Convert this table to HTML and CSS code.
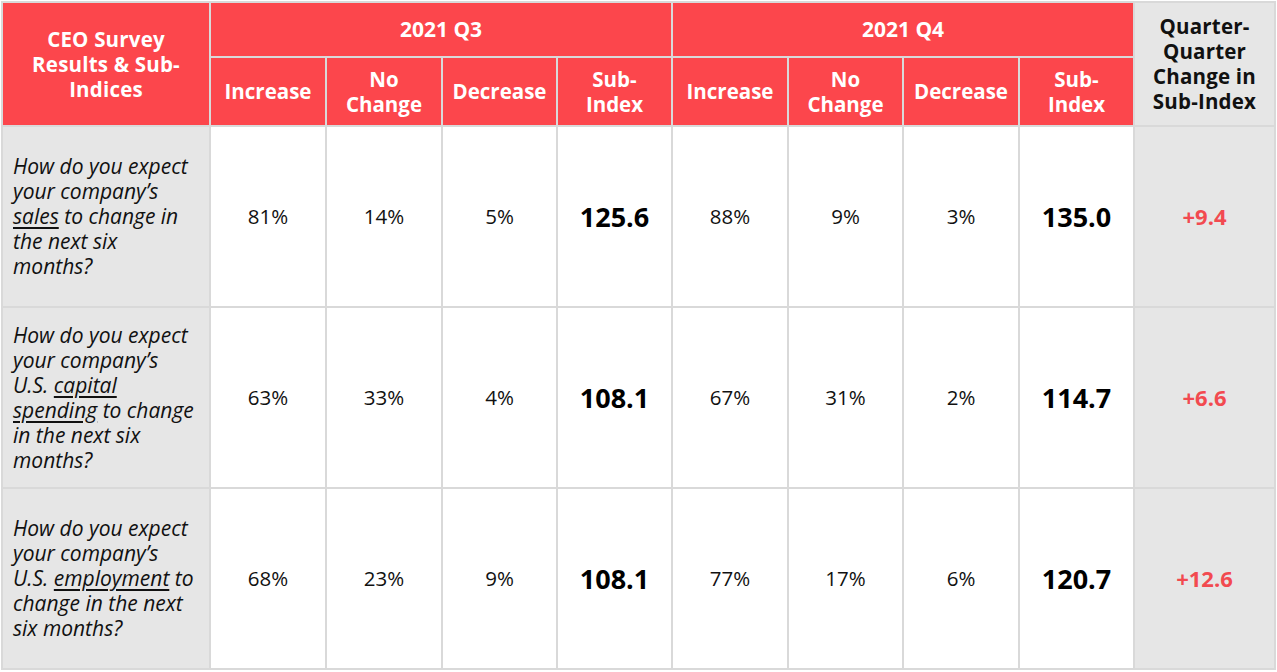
FILE: index.html
```html
<!DOCTYPE html>
<html>
<head>
<meta charset="utf-8">
<link rel="stylesheet" href="styles.css">
</head>
<body>
<div class="survey">
  <div class="cell head title"><span>CEO Survey Results &amp; Sub-Indices</span></div>
  <div class="cell head quarter q3">2021 Q3</div>
  <div class="cell head quarter q4">2021 Q4</div>
  <div class="cell gray-head change-head"><span>Quarter-Quarter Change in Sub-Index</span></div>

  <div class="cell head sub">Increase</div>
  <div class="cell head sub"><span>No<br>Change</span></div>
  <div class="cell head sub">Decrease</div>
  <div class="cell head sub"><span>Sub-<br>Index</span></div>
  <div class="cell head sub">Increase</div>
  <div class="cell head sub"><span>No<br>Change</span></div>
  <div class="cell head sub">Decrease</div>
  <div class="cell head sub"><span>Sub-<br>Index</span></div>

  <div class="cell question"><p>How do you expect your company’s <u>sales</u> to change in the next six months?</p></div>
  <div class="cell num">81%</div>
  <div class="cell num">14%</div>
  <div class="cell num">5%</div>
  <div class="cell idx">125.6</div>
  <div class="cell num">88%</div>
  <div class="cell num">9%</div>
  <div class="cell num">3%</div>
  <div class="cell idx">135.0</div>
  <div class="cell delta">+9.4</div>

  <div class="cell question"><p>How do you expect your company’s U.S. <u>capital spending</u> to change in the next six months?</p></div>
  <div class="cell num">63%</div>
  <div class="cell num">33%</div>
  <div class="cell num">4%</div>
  <div class="cell idx">108.1</div>
  <div class="cell num">67%</div>
  <div class="cell num">31%</div>
  <div class="cell num">2%</div>
  <div class="cell idx">114.7</div>
  <div class="cell delta">+6.6</div>

  <div class="cell question"><p>How do you expect your company’s U.S. <u>employment</u> to change in the next six months?</p></div>
  <div class="cell num">68%</div>
  <div class="cell num">23%</div>
  <div class="cell num">9%</div>
  <div class="cell idx">108.1</div>
  <div class="cell num">77%</div>
  <div class="cell num">17%</div>
  <div class="cell num">6%</div>
  <div class="cell idx">120.7</div>
  <div class="cell delta">+12.6</div>
</div>
</body>
</html>
```

FILE: styles.css
```css
html, body {
  margin: 0;
  padding: 0;
  background: #ffffff;
}

body {
  padding: 1px;
  font-family: "Open Sans", "Liberation Sans", sans-serif;
  color: #111111;
}

.survey {
  display: grid;
  grid-template-columns: 206px 114px 114px 113px 113px 114px 113px 114px 113px 139px;
  grid-template-rows: 53px 67px 179px 179px 179px;
  gap: 2px;
  padding: 2px;
  width: 1271px;
  background: #d9d9d9;
}

.cell {
  display: flex;
  align-items: center;
  justify-content: center;
  text-align: center;
  background: #ffffff;
  font-size: 20.5px;
  line-height: 25px;
}

.head {
  background: #fc464c;
  color: #ffffff;
  font-weight: 700;
  font-size: 20.5px;
  line-height: 25px;
}

.title {
  grid-row: 1 / span 2;
  padding: 0 18px;
  letter-spacing: 0.2px;
}

.q3 {
  grid-column: 2 / span 4;
}

.q4 {
  grid-column: 6 / span 4;
}

.quarter {
  font-size: 21px;
}

.gray-head {
  background: #e6e6e6;
  color: #111111;
  font-weight: 700;
  font-size: 20.5px;
}

.change-head {
  grid-column: 10;
  grid-row: 1 / span 2;
  padding: 0 8px;
  letter-spacing: 0.2px;
}

.sub {
  padding: 0 4px;
}

.question {
  justify-content: flex-start;
  text-align: left;
  background: #e6e6e6;
  font-style: italic;
  font-size: 21px;
  padding: 0 13px 0 10px;
}

.question p {
  margin: 0;
}

.question u {
  text-decoration-thickness: 1.5px;
  text-underline-offset: 3px;
}

.num {
  font-size: 20.5px;
}

.idx {
  font-size: 27px;
  font-weight: 700;
  color: #000000;
}

.delta {
  background: #e6e6e6;
  color: #f24a50;
  font-weight: 700;
  font-size: 22px;
}
```
